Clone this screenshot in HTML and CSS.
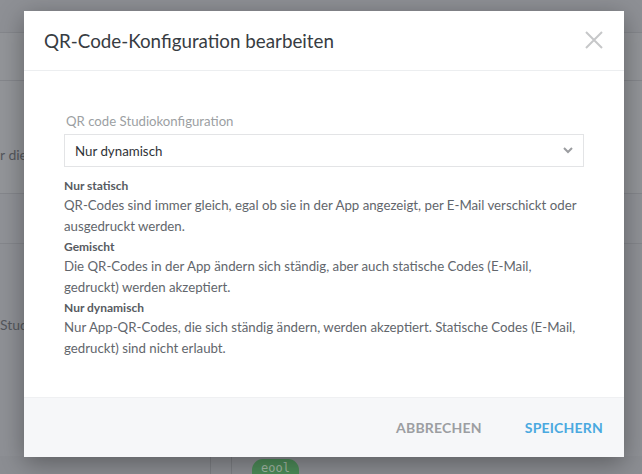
FILE: index.html
```html
<!DOCTYPE html>
<html lang="de">
<head>
<meta charset="utf-8">
<title>QR-Code-Konfiguration bearbeiten</title>
<link rel="stylesheet" href="styles.css">
</head>
<body>
<div class="page">
  <div class="band band-top"></div>
  <div class="band band-a"></div>
  <div class="band band-b"><span class="bg-text">r die</span></div>
  <div class="band band-c"></div>
  <div class="band band-d"><span class="bg-text">Stud</span></div>
  <div class="band band-e">
    <div class="cell cell-1"></div>
    <div class="cell cell-2"></div>
    <div class="cell cell-3"><span class="badge">eool</span></div>
  </div>
</div>

<div class="modal">
  <div class="modal-header">
    <h2 class="modal-title">QR-Code-Konfiguration bearbeiten</h2>
    <button class="close-btn" aria-label="Schließen">
      <svg width="18" height="18" viewBox="0 0 18 18"><path d="M1 1 L17 17 M17 1 L1 17" stroke="#c6c7c9" stroke-width="2" fill="none"/></svg>
    </button>
  </div>
  <div class="modal-body">
    <div class="field-label">QR code Studiokonfiguration</div>
    <div class="select">
      <span class="select-value">Nur dynamisch</span>
      <svg class="chevron" width="10" height="7" viewBox="0 0 10 7"><path d="M1 1 L5 5 L9 1" stroke="#9b9da0" stroke-width="2" fill="none"/></svg>
    </div>
    <div class="descriptions">
      <div class="desc-title">Nur statisch</div>
      <p class="desc-text">QR-Codes sind immer gleich, egal ob sie in der App angezeigt, per E-Mail verschickt oder ausgedruckt werden.</p>
      <div class="desc-title">Gemischt</div>
      <p class="desc-text">Die QR-Codes in der App ändern sich ständig, aber auch statische Codes (E-Mail, gedruckt) werden akzeptiert.</p>
      <div class="desc-title">Nur dynamisch</div>
      <p class="desc-text">Nur App-QR-Codes, die sich ständig ändern, werden akzeptiert. Statische Codes (E-Mail, gedruckt) sind nicht erlaubt.</p>
    </div>
  </div>
  <div class="modal-footer">
    <button class="btn btn-cancel">Abbrechen</button>
    <button class="btn btn-save">Speichern</button>
  </div>
</div>
</body>
</html>
```

FILE: styles.css
```css
* { box-sizing: border-box; }
html, body {
  margin: 0;
  padding: 0;
  width: 642px;
  height: 474px;
  overflow: hidden;
  font-family: Lato, "Open Sans", sans-serif;
}
.page {
  display: flex;
  flex-direction: column;
  height: 474px;
  background: #909297;
}
.band { border-bottom: 1px solid #85878c; }
.band-top { height: 33px; background: #8e9095; }
.band-a { height: 48px; background: #939599; }
.band-b {
  height: 113px;
  display: flex;
  align-items: center;
  padding-top: 34px;
  background: #939599;
}
.band-c { height: 50px; background: #909297; }
.band-d {
  flex: 1;
  display: flex;
  align-items: flex-start;
  padding-top: 72px;
  border-bottom: none;
  background: #8f9196;
}
.bg-text {
  font-size: 14px;
  color: #55585d;
  white-space: nowrap;
}
.band-e {
  height: 18px;
  display: flex;
  border-bottom: none;
  background: #8c8e93;
}
.cell { height: 100%; }
.cell-1 { width: 211px; border-right: 1px solid #7d7f84; }
.cell-2 { width: 21px; border-right: 1px solid #7d7f84; }
.cell-3 { padding-left: 20px; }
.badge {
  display: inline-block;
  height: 18px;
  padding: 0 9px;
  border-radius: 11px 11px 0 0;
  background: #4c8b58;
  color: #a3b8a6;
  font-family: "DejaVu Sans Mono", monospace;
  font-size: 12px;
  line-height: 18px;
}

.modal {
  position: absolute;
  left: 24px;
  top: 11px;
  width: 600px;
  background: #ffffff;
  box-shadow: 0 6px 24px rgba(0, 0, 0, 0.35);
}
.modal-header {
  height: 60px;
  display: flex;
  align-items: center;
  justify-content: space-between;
  padding: 0 21px 0 20px;
  border-bottom: 1px solid #eceef0;
}
.modal-title {
  margin: 0;
  font-size: 18.8px;
  font-weight: 400;
  color: #373c42;
}
.close-btn {
  border: 0;
  background: none;
  padding: 0;
  margin-top: -2px;
  width: 18px;
  height: 18px;
  cursor: pointer;
}
.close-btn svg { display: block; }
.modal-body {
  padding: 40px 40px 38px 40px;
}
.field-label {
  font-size: 13.2px;
  line-height: 20px;
  color: #9c9fa3;
  padding-left: 2px;
  margin-bottom: 3px;
}
.select {
  height: 33px;
  border: 1px solid #e3e4e6;
  display: flex;
  align-items: center;
  justify-content: space-between;
  padding: 0 10px 0 10px;
}
.select-value {
  font-size: 13.3px;
  color: #2f3338;
}
.chevron { display: block; }
.descriptions { margin-top: 9px; }
.desc-title {
  font-size: 12px;
  font-weight: 700;
  line-height: 19px;
  color: #575b61;
}
.desc-text {
  margin: 0;
  font-size: 13.25px;
  line-height: 21px;
  color: #62666c;
}
.modal-footer {
  height: 60px;
  background: #f6f7f9;
  border-top: 1px solid #eff0f2;
  display: flex;
  align-items: center;
  justify-content: flex-end;
  gap: 21px;
  padding-right: 10px;
}
.btn {
  border: 0;
  background: none;
  font-family: inherit;
  font-size: 14px;
  font-weight: 700;
  text-transform: uppercase;
  padding: 6px 11px;
  cursor: pointer;
  letter-spacing: 0.2px;
}
.btn-cancel { color: #9c9ea2; }
.btn-save { color: #4aa9e0; }
```
